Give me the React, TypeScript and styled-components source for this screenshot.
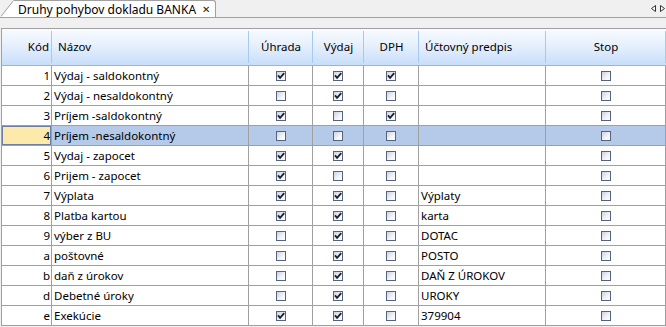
import React from 'react';
import styled, { createGlobalStyle } from 'styled-components';

const GlobalStyle = createGlobalStyle`
  html, body {
    margin: 0;
    padding: 0;
    background: #f0f0f0;
    overflow: hidden;
  }
  body {
    font-family: 'Noto Sans', 'Open Sans', sans-serif;
    font-size: 11.5px;
    color: #000;
  }
`;

type Row = {
  code: string;
  name: string;
  uhrada: boolean;
  vydaj: boolean;
  dph: boolean;
  predpis: string;
  stop: boolean;
};

const rows: Row[] = [
  { code: '1', name: 'Výdaj - saldokontný', uhrada: true, vydaj: true, dph: true, predpis: '', stop: false },
  { code: '2', name: 'Výdaj - nesaldokontný', uhrada: false, vydaj: true, dph: false, predpis: '', stop: false },
  { code: '3', name: 'Príjem -saldokontný', uhrada: true, vydaj: false, dph: true, predpis: '', stop: false },
  { code: '4', name: 'Príjem -nesaldokontný', uhrada: false, vydaj: false, dph: false, predpis: '', stop: false },
  { code: '5', name: 'Vydaj - zapocet', uhrada: true, vydaj: true, dph: false, predpis: '', stop: false },
  { code: '6', name: 'Prijem - zapocet', uhrada: true, vydaj: false, dph: false, predpis: '', stop: false },
  { code: '7', name: 'Výplata', uhrada: true, vydaj: true, dph: false, predpis: 'Výplaty', stop: false },
  { code: '8', name: 'Platba kartou', uhrada: true, vydaj: true, dph: false, predpis: 'karta', stop: false },
  { code: '9', name: 'výber z BU', uhrada: false, vydaj: true, dph: false, predpis: 'DOTAC', stop: false },
  { code: 'a', name: 'poštovné', uhrada: false, vydaj: true, dph: false, predpis: 'POSTO', stop: false },
  { code: 'b', name: 'daň z úrokov', uhrada: false, vydaj: true, dph: false, predpis: 'DAŇ Z ÚROKOV', stop: false },
  { code: 'd', name: 'Debetné úroky', uhrada: false, vydaj: true, dph: false, predpis: 'UROKY', stop: false },
  { code: 'e', name: 'Exekúcie', uhrada: true, vydaj: true, dph: false, predpis: '379904', stop: false },
];

const SELECTED = 3;

const Window = styled.div`
  width: 666px;
  height: 327px;
  overflow: hidden;
  display: flex;
  flex-direction: column;
`;

const TabStrip = styled.div`
  height: 17px;
  border-bottom: 1px solid #a0a0a0;
  display: flex;
  align-items: flex-end;
  padding-left: 1px;
`;

const TabSlant = styled.svg`
  display: block;
  flex: none;
`;

const Tab = styled.div`
  height: 16px;
  background: #fff;
  border-top: 1px solid #a0a0a0;
  border-right: 1px solid #a0a0a0;
  border-top-right-radius: 3px;
  display: flex;
  align-items: center;
  padding: 0 5px 0 4px;
  gap: 6px;
  font-size: 12px;
  line-height: 15px;
  white-space: nowrap;
`;

const CloseMark = styled.span`
  font-size: 10px;
  color: #222;
`;

const StripSpacer = styled.div`
  flex: 1;
`;

const ScrollArrows = styled.div`
  display: flex;
  gap: 4px;
  align-self: center;
  padding-right: 1px;
`;

const Gap = styled.div`
  height: 10px;
`;

const Grid = styled.div`
  margin-left: 1px;
  border-left: 1px solid #a0a0a0;
  border-top: 1px solid #a0a0a0;
  background: #fff;
  display: grid;
  grid-template-columns: 50px 197px 64px 51px 55px 127px 120px;
  grid-auto-rows: 20px;
  grid-template-rows: 37px;
`;

type Align = 'left' | 'center' | 'right';

const justify = (a: Align) => (a === 'left' ? 'flex-start' : a === 'right' ? 'flex-end' : 'center');

const HeadCell = styled.div<{ $align: Align }>`
  position: relative;
  background: linear-gradient(to bottom, #f8fbff 0%, #e6f0fd 45%, #c8defa 100%);
  border-bottom: 1px solid #8fb6e8;
  display: flex;
  align-items: center;
  justify-content: ${(p) => justify(p.$align)};
  padding: ${(p) => (p.$align === 'left' ? '0 0 0 6px' : p.$align === 'right' ? '0 3px 0 0' : '0')};
  padding-bottom: 2px;

  &::after {
    content: '';
    position: absolute;
    right: 0;
    top: 2px;
    bottom: 2px;
    width: 1px;
    background: #a6c9f1;
  }
`;

const Cell = styled.div<{ $align: Align; $selected: boolean }>`
  border-right: 1px solid #a0a0a0;
  border-bottom: 1px solid #a0a0a0;
  background: ${(p) => (p.$selected ? '#b5c9e9' : '#fff')};
  display: flex;
  align-items: center;
  justify-content: ${(p) => justify(p.$align)};
  padding: ${(p) => (p.$align === 'left' ? '0 0 0 2px' : p.$align === 'right' ? '0 1px 0 0' : '0')};
  white-space: nowrap;
  overflow: hidden;
  line-height: 18px;
`;

const FocusCell = styled(Cell)`
  background: #fde9a9;
  box-shadow: inset 0 0 0 1px #6d7fa3;
`;

const CheckBox = ({ checked }: { checked: boolean }) => (
  <svg width="10" height="10" viewBox="0 0 10 10">
    <defs>
      <linearGradient id="cbfill" x1="0" y1="0" x2="1" y2="1">
        <stop offset="0" stopColor="#c9cedb" />
        <stop offset="0.6" stopColor="#f4f5fa" />
        <stop offset="1" stopColor="#ffffff" />
      </linearGradient>
    </defs>
    <rect x="0.5" y="0.5" width="9" height="9" fill="url(#cbfill)" stroke="#55647e" />
    {checked && (
      <path d="M2 4.4 L4.1 6.9 L8.2 2.2" fill="none" stroke="#1a212c" strokeWidth="1.8" />
    )}
  </svg>
);

const columns: { title: string; align: Align }[] = [
  { title: 'Kód', align: 'right' },
  { title: 'Názov', align: 'left' },
  { title: 'Úhrada', align: 'center' },
  { title: 'Výdaj', align: 'center' },
  { title: 'DPH', align: 'center' },
  { title: 'Účtovný predpis', align: 'left' },
  { title: 'Stop', align: 'center' },
];

export default function App() {
  return (
    <>
      <GlobalStyle />
      <Window>
        <TabStrip>
          <TabSlant width="13" height="17" viewBox="0 0 13 17">
            <polygon points="0,17 13,0 13,17" fill="#fff" />
            <line x1="0" y1="16.5" x2="12.5" y2="0.5" stroke="#a0a0a0" />
          </TabSlant>
          <Tab>
            <span>Druhy pohybov dokladu BANKA</span>
            <CloseMark>✕</CloseMark>
          </Tab>
          <StripSpacer />
          <ScrollArrows>
            <svg width="5" height="7" viewBox="0 0 5 7">
              <polygon points="4.5,0.5 0.5,3.5 4.5,6.5" fill="#fff" stroke="#333" />
            </svg>
            <svg width="5" height="7" viewBox="0 0 5 7">
              <polygon points="0.5,0.5 4.5,3.5 0.5,6.5" fill="#fff" stroke="#333" />
            </svg>
          </ScrollArrows>
        </TabStrip>
        <Gap />
        <Grid>
          {columns.map((c) => (
            <HeadCell key={c.title} $align={c.align}>
              {c.title}
            </HeadCell>
          ))}
          {rows.map((r, i) => {
            const sel = i === SELECTED;
            const CodeCell = sel ? FocusCell : Cell;
            return (
              <React.Fragment key={r.code}>
                <CodeCell $align="right" $selected={sel}>{r.code}</CodeCell>
                <Cell $align="left" $selected={sel}>{r.name}</Cell>
                <Cell $align="center" $selected={sel}><CheckBox checked={r.uhrada} /></Cell>
                <Cell $align="center" $selected={sel}><CheckBox checked={r.vydaj} /></Cell>
                <Cell $align="center" $selected={sel}><CheckBox checked={r.dph} /></Cell>
                <Cell $align="left" $selected={sel}>{r.predpis}</Cell>
                <Cell $align="center" $selected={sel}><CheckBox checked={r.stop} /></Cell>
              </React.Fragment>
            );
          })}
        </Grid>
      </Window>
    </>
  );
}
